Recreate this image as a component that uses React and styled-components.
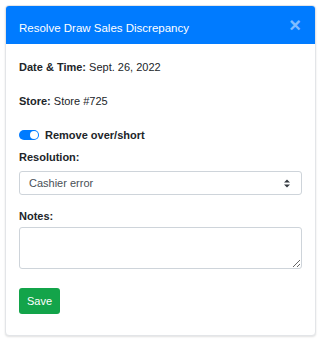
import React from 'react'
import styled, { createGlobalStyle } from "styled-components";

const Global = createGlobalStyle`
  body {
    margin: 0;
    background: #fff;
    font-family: "Liberation Sans", Arial, sans-serif;
    color: #212529;
  }
`

function App() {
    return(
<Page>
    <Global/>
    <Card>
        <Header>
            <Title>Resolve Draw Sales Discrepancy</Title>
            <Close>×</Close>
        </Header>
        <Body>
            <Line><b>Date &amp; Time:</b> Sept. 26, 2022</Line>
            <Line><b>Store:</b> Store #725</Line>
            <SwitchRow>
                <Switch><Knob/></Switch>
                <b>Remove over/short</b>
            </SwitchRow>
            <Label $gap={6}>Resolution:</Label>
            <Select>
                <span>Cashier error</span>
                <svg width="6" height="9" viewBox="0 0 6 9">
                    <path d="M0 3.5 L3 0.5 L6 3.5 Z M0 5.5 L3 8.5 L6 5.5 Z" fill="#343a40"/>
                </svg>
            </Select>
            <Label $gap={3}>Notes:</Label>
            <Notes/>
            <Save>Save</Save>
        </Body>
    </Card>
</Page>
    )
}

export default App;

const Page=styled.div`
  padding:5px 6px 6px 5px;
`
const Card=styled.div`
  border:1px solid #e3e5e8;
  border-radius:4px;
  box-shadow:0 1px 2px rgba(0,0,0,0.12);
  overflow:hidden;
  background:#fff;
`
const Header=styled.div`
  background:#007bff;
  height:38px;
  display:flex;
  align-items:center;
  justify-content:space-between;
  padding:0 14px 0 13px;
  color:#fff;
`
const Title=styled.div`
  font-size:11.5px;
  padding-top:6px;
`
const Close=styled.div`
  font-size:20px;
  font-weight:bold;
  color:rgba(255,255,255,0.5);
  line-height:1;
`
const Body=styled.div`
  padding:15px 13px 21px 13px;
  font-size:11px;
`
const Line=styled.div`
  margin-bottom:18px;
  line-height:16px;
`
const SwitchRow=styled.div`
  display:flex;
  align-items:center;
  gap:6px;
  line-height:16px;
  margin-bottom:6px;
`
const Switch=styled.div`
  width:18px;
  height:10px;
  border-radius:6px;
  background:#007bff;
  display:flex;
  align-items:center;
  justify-content:flex-end;
  padding:0 1px;
`
const Knob=styled.div`
  width:8px;
  height:8px;
  border-radius:50%;
  background:#fff;
`
const Label=styled.div`
  font-weight:bold;
  line-height:16px;
  margin-bottom:${p => p.$gap}px;
`
const Select=styled.div`
  box-sizing:border-box;
  height:24px;
  border:1px solid #ced4da;
  border-radius:3px;
  display:flex;
  align-items:center;
  justify-content:space-between;
  padding:0 11px 0 9px;
  margin-bottom:13px;
  color:#495057;
`
const Notes=styled.textarea`
  display:block;
  box-sizing:border-box;
  width:100%;
  height:42px;
  border:1px solid #ced4da;
  border-radius:3px;
  margin:0 0 19px 0;
`
const Save=styled.button`
  background:#13a44a;
  border:none;
  border-radius:3px;
  color:#fff;
  font-family:"Liberation Sans", Arial, sans-serif;
  font-size:11px;
  width:41px;
  height:26px;
  padding:0;
`
